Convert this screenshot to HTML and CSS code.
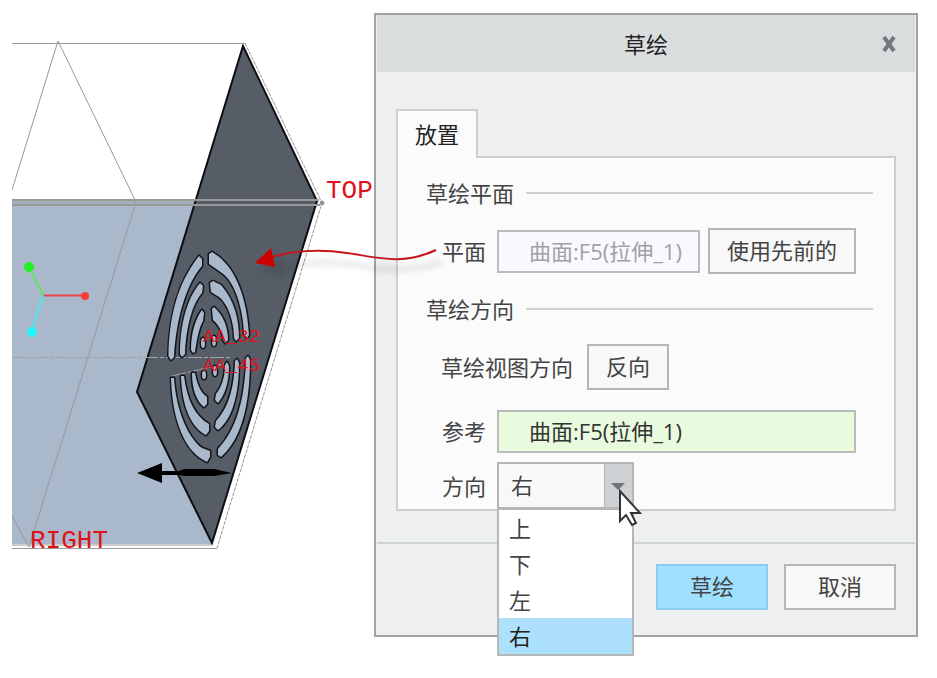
FILE: index.html
```html
<!DOCTYPE html>
<html lang="zh-CN">
<head>
  <meta charset="UTF-8">
  <meta name="viewport" content="width=device-width, initial-scale=1.0">
  <title>草绘</title>
  <link rel="stylesheet" href="styles.css">
</head>
<body>
  <main class="workspace">

    <!-- 模型视图 -->
    <svg class="scene" viewBox="12 13 362 625" role="img" aria-label="模型视图">
      <defs>
        <filter id="soft" x="-20%" y="-100%" width="140%" height="300%">
          <feGaussianBlur stdDeviation="3"/>
        </filter>
      </defs>

      <polygon class="face-light" points="12,200 317,200 212,544 12,544"/>
      <polygon class="face-band" points="12,199 317,199 317,204 12,204"/>
      <polygon class="face-dark" points="243,46 317,201 212,543 137,392"/>

      <g class="edges">
        <path d="M12 43.5H245M12 548.5H217M12 545H212"/>
        <path stroke-width="2" d="M12 200H319M12 205H320"/>
        <path d="M12 190L58 41L136 202L29 547L12 516"/>
        <path d="M245 43L322 203L217 548" stroke-dasharray="4 1"/>
        <path class="axis" d="M12 357.5H232M172 376L228 363"/>
        <circle cx="322" cy="203" r="2"/>
      </g>

      <!-- 散热孔 -->
      <g class="slots">
        <path d="M168.5 356C169 320 176 285 199 256L202 259V266C186 284 176 320 174 357L171 360Z"/>
        <path d="M180 354C180 325 187 298 200 283L203 286L202 293C192 304 186 328 185 354L182 357Z"/>
        <path d="M191 350C191 332 196 318 202 310L204 313L203 321C199 328 197 338 195 352L193 353Z"/>
        <path d="M209 254L212 252L218 256C236 270 247 298 249 335L247 338L244 334C243 308 235 282 222 273L209 264Z"/>
        <path d="M210 283L213 281L221 285C234 300 239 318 239 338L236 341L234 338C234 320 227 303 219 297L211 292Z"/>
        <path d="M212 309L214 307C224 316 228 328 228 340L225 343L223 340C223 334 220 326 213 320Z"/>
        <path d="M171 378H174C176 410 188 438 202 448L210 451V457L207 462L200 458C182 445 172 415 171 378Z"/>
        <path d="M181 376H184C187 400 195 416 209 424V431L206 435C192 428 182 408 181 376Z"/>
        <path d="M192 373H195C197 385 201 393 207 397V404L204 407C196 401 192 388 192 373Z"/>
        <path d="M246 358L248 356L250 360C250 405 241 440 221 457L218 455V449C236 430 245 400 246 358Z"/>
        <path d="M235 361L237 359L239 363C239 395 232 420 218 430L215 427L216 421C228 408 234 390 235 361Z"/>
        <path d="M225 365L227 362L229 366C229 382 225 395 218 403L215 400L216 394C221 388 225 378 225 365Z"/>
        <ellipse cx="203" cy="343" rx="2" ry="5"/>
        <ellipse cx="214" cy="341" rx="2" ry="5"/>
        <ellipse cx="204" cy="375" rx="2" ry="4"/>
        <ellipse cx="215" cy="371" rx="2" ry="5"/>
      </g>

      <!-- 坐标系 -->
      <g class="triad">
        <path stroke="#5ce65c" d="M43 295L29 267"/>
        <path stroke="#ee4444" d="M43 295.500H85"/>
        <path stroke="#4de8ee" d="M43 295L32 331"/>
        <circle fill="#22f022" cx="29" cy="267" r="5"/>
        <circle fill="#fb3b3b" cx="85" cy="296" r="4"/>
        <circle fill="#22f4fb" cx="32" cy="332" r="5"/>
      </g>

      <path d="M137 473L162 463V471H179L184 469H214L232 473L214 476H184L179 475H162V483Z"/>

      <g class="tags">
        <text x="326" y="198">TOP</text>
        <text x="30" y="548">RIGHT</text>
        <text class="small" x="203" y="342">AA_32</text>
        <text class="small" x="203" y="371">AA_45</text>
      </g>

      <!-- 引线箭头 -->
      <g class="leader-shadow">
        <path d="M279 269C310 260 330 262 352 264C376 269 402 274 442 262"/>
        <path class="head" d="M265 270L279 259L283 275Z"/>
      </g>
      <path class="leader" d="M272 257C300 249 326 250 347 253C376 257 402 266 436 250"/>
      <path class="leader-head" d="M255 263L271 248L275 267Z"/>
    </svg>

    <!-- 草绘对话框 -->
    <form class="dialog" onsubmit="return false">
      <header class="titlebar">
        <h1>草绘</h1>
        <button type="button" class="close" aria-label="关闭">
          <svg viewBox="0 0 16 16" width="16" height="16"><path d="M3 1L13 15M13 1L3 15"/></svg>
        </button>
      </header>

      <div class="content">
        <button type="button" class="tab">放置</button>

        <div class="panel">
          <h2 class="group">草绘平面</h2>
          <div class="row">
            <label for="plane">平面</label>
            <input type="text" id="plane" class="plane" value="曲面:F5(拉伸_1)" disabled>
            <button type="button">使用先前的</button>
          </div>

          <h2 class="group">草绘方向</h2>
          <div class="row view-row">
            <span class="view-label">草绘视图方向</span>
            <button type="button">反向</button>
          </div>
          <div class="row ref-row">
            <label for="reference">参考</label>
            <input type="text" id="reference" class="reference" value="曲面:F5(拉伸_1)">
          </div>
          <div class="row">
            <label for="direction">方向</label>
            <div class="dropdown">
              <select id="direction">
                <option>上</option>
                <option>下</option>
                <option>左</option>
                <option selected>右</option>
              </select>
              <span class="arrow"></span>
              <ul class="list">
                <li>上</li>
                <li>下</li>
                <li>左</li>
                <li class="active">右</li>
              </ul>
              <svg class="cursor" viewBox="0 0 24 38" width="24" height="38">
                <path d="M2 2V32L8 26L14 36L18 34L13 24H22Z"/>
              </svg>
            </div>
          </div>
        </div>
      </div>

      <footer class="actions">
        <button type="submit" class="primary">草绘</button>
        <button type="button">取消</button>
      </footer>
    </form>

  </main>
</body>
</html>
```
FILE: styles.css
```css
* {
  margin: 0;
  padding: 0;
  box-sizing: border-box;
}

body {
  background-color: #fff;
  color: #444;
  font-family: 'Open Sans', 'Noto Sans CJK SC', sans-serif;
  font-size: 22px;
  line-height: 30px;
}

button,
input,
select {
  font: inherit;
  color: inherit;
}

.workspace {
  display: grid;
  grid-template-columns: minmax(0, 362fr) minmax(0, 544fr);
  align-items: start;
  padding: 13px 19px 40px 12px;
}

/* model view */
.scene {
  display: block;
  width: 100%;
  overflow: visible;
  position: relative;
  z-index: 1;
  pointer-events: none;
}

.face-light {
  fill: #a9b8ca;
}

.face-band {
  fill: #a3afba;
}

.face-dark {
  fill: #575d67;
  stroke: #0c0e12;
  stroke-width: 2;
}

.edges {
  fill: none;
  stroke: #999;
  stroke-width: 1;
}

.edges circle {
  fill: #889;
}

.edges .axis {
  stroke: #a0a4a8;
  stroke-dasharray: 14 2 4 2;
}

.slots {
  fill: #a9b8ca;
  stroke: #11151c;
  stroke-width: 3;
  stroke-linejoin: round;
  paint-order: stroke;
}

.triad {
  stroke-width: 2;
}

.tags {
  fill: #e01018;
  font-family: 'Liberation Mono', monospace;
  font-size: 26px;
}

.tags .small {
  font-size: 19px;
}

.leader {
  fill: none;
  stroke: #c4161c;
  stroke-width: 2;
}

.leader-head {
  fill: #cc0000;
}

.leader-shadow {
  fill: none;
  stroke: #000;
  stroke-width: 5;
  opacity: 0.1;
  filter: url(#soft);
}

.leader-shadow .head {
  fill: #000;
}

/* dialog */
.dialog {
  border: 2px solid #a0a2a3;
  background-color: #eeeff1;
}

.titlebar {
  display: grid;
  grid-template-columns: 1fr auto 1fr;
  align-items: center;
  height: 57px;
  margin: 0 1px;
  background-color: #dadddd;
  color: #222;
}

h1,
h2 {
  font-size: 22px;
  font-weight: normal;
}

.titlebar h1 {
  grid-column: 2;
}

.titlebar .close {
  display: flex;
  justify-self: end;
  min-height: 0;
  margin-right: 16px;
  padding: 2px;
  border: none;
  background: none;
}

.close path {
  fill: none;
  stroke: #74777a;
  stroke-width: 4;
}

button {
  min-height: 46px;
  padding: 0 17px 2px;
  border: 2px solid #b4b6b8;
  background-color: #f8f8f8;
}

.content {
  padding: 37px 20px 31px;
}

.content .tab {
  display: block;
  position: relative;
  height: 49px;
  margin-bottom: -2px;
  padding: 0 17px 2px;
  border-color: #cccfd1;
  border-bottom: none;
  background-color: #fbfbfb;
  color: #222;
}

.panel {
  padding: 20px 21px 0 28px;
  border: 2px solid #cccfd1;
  background-color: #fbfbfb;
}

.group {
  display: flex;
  align-items: center;
  gap: 12px;
}

.group::after {
  content: '';
  flex: 1;
  height: 2px;
  background-color: #d0d1d2;
}

.row {
  display: flex;
  align-items: center;
  gap: 8px;
  min-height: 46px;
  padding: 0 17px 0 13px;
}

.row label {
  width: 50px;
  text-align: center;
}

.group + .row {
  margin: 20px 0;
}

.row input {
  flex: 1;
  min-width: 0;
  height: 43px;
  padding: 0 0 2px 30px;
  border: 2px solid #b9bbbc;
}

.row .plane {
  background-color: #f9f8fc;
  color: #a29fa8;
}

.row .reference {
  background-color: #e8fbdf;
  color: #333;
}

.group + .view-row {
  gap: 14px;
  margin-bottom: 18px;
  padding-left: 15px;
}

.ref-row {
  margin-bottom: 8px;
}

.dropdown {
  position: relative;
  width: 137px;
}

.dropdown select {
  display: block;
  width: 100%;
  height: 47px;
  padding: 0 12px 2px;
  border: 2px solid #b4b6b8;
  border-radius: 0;
  background-color: #f8f8f8;
  appearance: none;
}

.arrow {
  position: absolute;
  top: 2px;
  right: 2px;
  bottom: 2px;
  width: 28px;
  border-left: 1px solid #b4b6b8;
  background-color: #cdd1d3;
}

.arrow::after {
  content: '';
  position: absolute;
  top: 19px;
  left: 6px;
  border: 7px solid transparent;
  border-top-color: #707375;
  border-bottom: none;
}

.list {
  position: absolute;
  top: 100%;
  left: 0;
  right: 0;
  border: 2px solid #b4b6b8;
  border-top-width: 1px;
  background-color: #fff;
  list-style: none;
}

.list li {
  padding: 0 10px;
  line-height: 36px;
}

.list .active {
  background-color: #ade1fb;
  color: #222;
}

.cursor {
  position: absolute;
  top: 27px;
  left: 121px;
  fill: #fff;
  stroke: #333;
  stroke-width: 2;
}

.actions {
  display: flex;
  justify-content: flex-end;
  gap: 16px;
  margin: 0 1px;
  padding: 20px 19px 25px;
  border-top: 2px solid #cfd2d3;
}

.actions button {
  width: 112px;
}

.actions .primary {
  border-color: #8cccee;
  background-color: #9fdfff;
}
```
